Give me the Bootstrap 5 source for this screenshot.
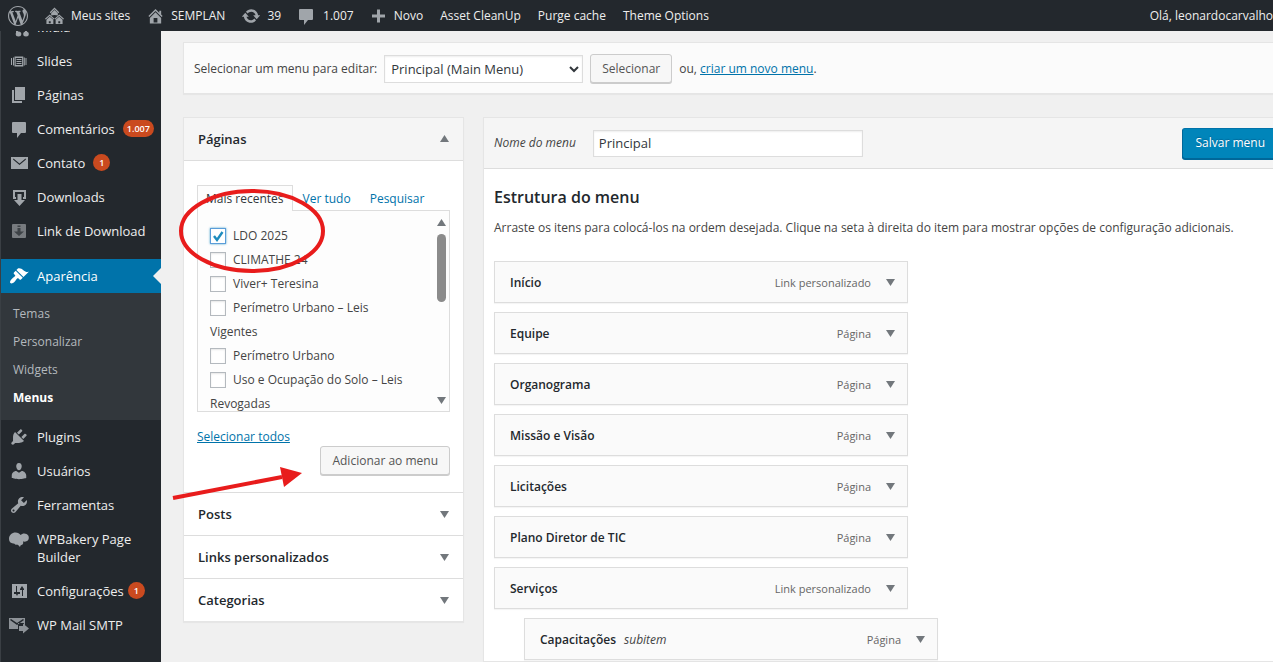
<!DOCTYPE html>
<html lang="pt-BR">
<head>
<meta charset="utf-8">
<meta name="viewport" content="width=device-width, initial-scale=1">
<title>Menus ‹ SEMPLAN — WordPress</title>
<link href="https://cdn.jsdelivr.net/npm/bootstrap@5.3.0/dist/css/bootstrap.min.css" rel="stylesheet">
<style>
body{font-family:"Open Sans","Noto Sans",sans-serif;font-size:12px;line-height:18px;color:#444;background:#f0f0f0;overflow-x:hidden}
a{color:#0073aa}
svg{fill:currentColor;flex:none}
/* admin bar */
.adminbar{background:#23282d;height:31px;padding-left:8px;gap:17px;position:relative;z-index:3;white-space:nowrap}
.adminbar a{color:#eee;text-decoration:none;display:flex;align-items:center;gap:7px}
.adminbar svg,.sidemenu svg{color:#a0a5aa}
/* side menu */
.sidemenu{width:161px;flex:none;background:#23282d;border-left:1px solid #3a3f44;font-size:13px}
.sidemenu ul{margin:0;padding:0;list-style:none}
.toplist{position:relative;z-index:1;margin-top:-21px!important}
.toplist>li>a{display:flex;gap:8px;padding:8px 0 8px 8px;color:#eee;text-decoration:none}
.toplist>li>a svg{margin:-1px 0}
.pill{background:#ca4a1f;color:#fff;font-size:9px;font-weight:600;line-height:17px;border-radius:9px;min-width:17px;padding:0 4px;text-align:center;height:17px}
.toplist>.current{margin-top:11px}
.toplist>.current>a{background:#0073aa;color:#fff;position:relative}
.toplist>.current>a svg{color:#fff}
.toplist>.current>a::after{content:"";position:absolute;right:0;top:9px;border:8px solid transparent;border-left-width:0;border-right-color:#f0f0f0}
.submenu{background:#32373c;padding:7px 0 8px!important;font-size:12px}
.submenu a{display:block;padding:5px 12px;color:#b4b9be;text-decoration:none}
.submenu .on{color:#fff;font-weight:700}
/* content */
.content-area{padding:11px 0 0 22px;min-width:0}
.panel{border:1px solid #e5e5e5;background:#fff;box-shadow:0 1px 1px rgba(0,0,0,.04)}
.flush-end{border-right:0}
.picker{background:#fbfbfb;padding:11px 10px 10px;margin-bottom:23px;gap:7px}
.picker .field{width:199px}
.field{border:1px solid #ddd;background:#fff;color:#32373c;font-size:13px;height:28px;padding:0 5px;border-radius:0;box-shadow:inset 0 1px 2px rgba(0,0,0,.07)}
.picker .field{padding:0 2px}
.wpbtn{font-size:12px;line-height:18px;height:29px;padding:4px 11px;border:1px solid #ccc;border-radius:3px;background:#f7f7f7;color:#555;box-shadow:0 1px 0 #ccc}
.savebtn{background:#0085ba;border-color:#0073aa #006799 #006799;color:#fff;font-weight:500;box-shadow:0 1px 0 #006799;border-right:0;border-radius:3px 0 0 3px;text-shadow:0 -1px 1px #006799;height:31px;padding:5px 8px 5px 12px}
.boxes{width:281px;flex:none;position:relative}
.boxhead{width:100%;height:43px;padding:0 14px;border:0;border-top:1px solid #ddd;background:#fff;color:#23282d;font-weight:600;font-size:13px;display:flex;align-items:center;justify-content:space-between}
.boxhead.open{background:#f5f5f5;border-top:0;border-bottom:1px solid #ddd}
.tri{width:9px;height:8px;color:#72777c}
.boxbody{padding:24px 13px 17px}
.tabs{position:relative;z-index:1;height:26px;margin-bottom:-1px}
.tabs a{text-decoration:none;padding:5px 9px 0 10px;height:26px}
.tabs .active{border:1px solid #ddd;border-bottom:0;background:#fdfdfd;color:#32373c;padding:4px 8px 0}
.choices{height:202px;border:1px solid #ddd;background:#fdfdfd;padding:13px 30px 0 12px;overflow:hidden;position:relative}
.choices label{display:block;line-height:24px}
.tick{appearance:none;width:16px;height:16px;border:1px solid #b4b9be;background:#fff;margin:0 7px 0 0;vertical-align:-4px;box-shadow:inset 0 1px 2px rgba(0,0,0,.1)}
.tick:checked{border-color:#5b9dd9;box-shadow:0 0 2px rgba(30,140,190,.8);background:#fff url("data:image/svg+xml,%3Csvg xmlns='http://www.w3.org/2000/svg' viewBox='0 0 14 14'%3E%3Cpath d='M3 7l3 4 5.500-8' fill='none' stroke='%231e8cbe' stroke-width='2.400'/%3E%3C/svg%3E")}
.scroller{position:absolute;right:2px;top:8px;bottom:7px;width:12px;display:flex;flex-direction:column;align-items:center;color:#8b8b8b}
.thumb{width:9px;height:68px;border-radius:5px;background:#8b8b8b;margin:7px 0 auto}
.marks{position:absolute;left:-11px;top:68px;z-index:2;pointer-events:none}
.editor{margin-left:19px}
.edithead{height:51px;background:#f5f5f5;border-bottom:1px solid #ddd;padding-left:10px;gap:12px}
.namebox{width:270px;height:27px;margin-left:5px}
.h-struct{font-size:16px;line-height:24px;font-weight:600;color:#23282d;margin:0 0 10px}
.editbody{padding:16px 10px 0}
.items{margin:24px 0 0;padding:0;list-style:none;display:grid;gap:9px}
.items li{width:414px;height:42px;border:1px solid #ddd;background:#fafafa;padding:1px 12px 0 15px;box-shadow:0 1px 1px rgba(0,0,0,.04)}
.items b{font-weight:600;color:#23282d}
.items span{font-size:11px;color:#666}
.items button{border:0;background:none;padding:0;margin-left:15px;line-height:8px;display:flex}
.items .sub{margin-left:30px}
</style>
</head>
<body>
<div class="d-flex flex-column min-vh-100">
<nav class="adminbar d-flex align-items-center" aria-label="Barra de ferramentas">
  <a href="#" aria-label="Sobre o WordPress"><svg width="20" height="20" viewBox="0 0 20 20"><path d="M20 10c0-5.510-4.490-10-10-10C4.480 0 0 4.490 0 10c0 5.520 4.480 10 10 10 5.510 0 10-4.480 10-10zM7.780 15.370L4.370 6.220c.55-.02 1.170-.08 1.170-.08.5-.06.44-1.130-.06-1.110 0 0-1.450.11-2.370.11-.18 0-.37 0-.58-.01C4.120 2.690 6.870 1.110 10 1.110c2.330 0 4.450.87 6.050 2.340-.68-.11-1.650.39-1.650 1.580 0 .74.45 1.360.9 2.100.35.61.55 1.360.55 2.460 0 1.490-1.400 5-1.400 5l-3.030-8.370c.54-.02.82-.17.82-.17.5-.05.44-1.250-.06-1.220 0 0-1.440.12-2.380.12-.87 0-2.330-.12-2.330-.12-.5-.03-.56 1.200-.06 1.220l.92.08 1.260 3.410zM17.410 10c.24-.64.74-1.870.43-4.250.7 1.290 1.050 2.710 1.050 4.250 0 3.290-1.730 6.240-4.400 7.780.97-2.590 1.940-5.200 2.920-7.780zM6.100 18.090C3.120 16.650 1.110 13.530 1.110 10c0-1.300.23-2.480.72-3.590C3.250 10.300 4.670 14.200 6.100 18.090zm4.030-6.630l2.580 6.980c-.86.29-1.760.45-2.710.45-.79 0-1.570-.11-2.290-.33.81-2.380 1.620-4.740 2.420-7.100z"/></svg></a>
  <a href="#"><svg width="19" height="20" viewBox="0 0 20 20"><path d="M10 1l5 5-1 1-4-4-4 4-1-1zM6.500 7L10 3.800 13.500 7v2.500L10 9l-3.500.5zM5 8.500l5 4.500-.8.8L5 10l-4.200 3.800L0 13zM15 8.500l5 4.500-.8.8L15 10l-4.200 3.800L10 13zM1.500 14L5 10.800 8.800 14v4.500H1.500zm2.500 1.500v2h2v-2zM11.200 14L15 10.800l3.500 3.200v4.500h-7.300zm2.800 1.500v2h2v-2z" fill-rule="evenodd"/></svg>Meus sites</a>
  <a href="#"><svg width="17" height="20" viewBox="1 0 18 20"><path d="M16 8.500l1.530 1.530-1.060 1.060L10 4.600l-6.470 6.490-1.060-1.060L10 2.500l4 4v-2h2v4zm-6-2.460l6 5.990V18H4v-5.970zM12 17v-5H8v5h4z"/></svg>SEMPLAN</a>
  <a href="#"><svg width="18" height="20" viewBox="1 0 18 20"><path d="M10.200 3.280c3.530 0 6.430 2.610 6.920 6h2.080l-3.500 4-3.500-4h2.320c-.45-1.970-2.210-3.450-4.320-3.450-1.450 0-2.730.71-3.540 1.780L4.950 5.660C6.230 4.200 8.110 3.280 10.200 3.280zm-.4 13.440c-3.520 0-6.430-2.610-6.920-6H.8l3.500-4c1.170 1.330 2.330 2.670 3.500 4H5.480c.45 1.970 2.210 3.450 4.320 3.450 1.450 0 2.730-.71 3.540-1.780l1.710 1.950c-1.280 1.460-3.150 2.380-5.250 2.380z"/></svg>39</a>
  <a href="#"><svg width="18" height="20" viewBox="2 0 18 20"><path d="M4 3h12q1 0 1 1v9q0 1-1 1h-4l-4 5v-5H4q-1 0-1-1V4q0-1 1-1z"/></svg>1.007</a>
  <a href="#"><svg width="16" height="20" viewBox="3 0 16 20"><path d="M17 8.500v3h-5v5H9v-5H4v-3h5v-5h3v5z"/></svg>Novo</a>
  <a href="#">Asset CleanUp</a>
  <a href="#">Purge cache</a>
  <a href="#">Theme Options</a>
  <a href="#" class="ms-auto">Olá, leonardocarvalho</a>
</nav>

<div class="d-flex flex-grow-1">
<aside class="sidemenu">
  <ul class="toplist">
    <li><a href="#"><svg width="20" height="20" viewBox="0 0 20 20"><path d="M7 3l11-1v13h-2V7H9v10H7z"/><ellipse cx="9.500" cy="17" rx="2.800" ry="2.500"/><ellipse cx="17" cy="17" rx="2.800" ry="2.500"/></svg>Mídia</a></li>
    <li><a href="#"><svg width="20" height="20" viewBox="0 0 20 20"><path fill-rule="evenodd" d="M2 7h1v7H2zM16.500 7h1v7h-1zM4 6.500h1v8H4zM14.800 6.500h1v8h-1zM5.500 5.500h8.800v10H5.500zm1.200 1.500v7h6.400V7zM7.500 8h5v1h-5zm0 2h5v1h-5zm0 2h5v1h-5z"/></svg>Slides</a></li>
    <li><a href="#"><svg width="20" height="20" viewBox="0 0 20 20"><path d="M6 15V2h10v13H6zm-1 1h8v2H3V5h2v11z"/></svg>Páginas</a></li>
    <li><a href="#"><svg width="20" height="20" viewBox="0 0 20 20"><path d="M4 3h12q1 0 1 1v9q0 1-1 1h-4l-4 5v-5H4q-1 0-1-1V4q0-1 1-1z"/></svg>Comentários<span class="pill">1.007</span></a></li>
    <li><a href="#"><svg width="20" height="20" viewBox="0 0 20 20"><path d="M2 4h17v12H2zm2.500 1.500L4 6.500l6.500 5.500L17 6.500l-.5-1-6 5z" fill-rule="evenodd"/></svg>Contato<span class="pill">1</span></a></li>
    <li><a href="#"><svg width="20" height="20" viewBox="0 0 20 20"><path d="M4 3h13v9h-3v-2h1V5H6v5h1v2H4zM8.500 7h4v6h3.500l-5.500 6L5 13h3.500z"/></svg>Downloads</a></li>
    <li><a href="#"><svg width="20" height="20" viewBox="0 0 20 20"><rect x="3" y="3" width="14" height="14" rx="1" fill="#777b7f"/><path d="M8.500 4.500h3V6h-3zm0 2.500h3v3.500H15L10 15l-5-4.500h3.500z" fill="#3d4246"/></svg>Link de Download</a></li>
    <li class="current"><a href="#"><svg width="20" height="20" viewBox="0 0 20 20"><path d="M14.480 11.060L7.410 3.990l1.500-1.500c.5-.56 2.300-.47 3.510.32 1.210.8 1.430 1.280 2.910 2.100 1.180.64 2.450 1.260 4.450.85zm-.71.71L6.700 4.700 4.930 6.470c-.39.39-.39 1.020 0 1.410l1.060 1.060c.39.39.39 1.030 0 1.420-.6.6-1.430 1.110-2.210 1.690-.35.26-.7.53-1.010.84C1.430 14.230.4 16.080 1.400 17.070c.99 1 2.840-.03 4.180-1.360.31-.31.58-.66.85-1.020.57-.78 1.080-1.610 1.690-2.210.39-.39 1.020-.39 1.410 0l1.060 1.060c.39.39 1.020.39 1.410 0z"/></svg>Aparência</a>
      <ul class="submenu">
        <li><a href="#">Temas</a></li><li><a href="#">Personalizar</a></li><li><a href="#">Widgets</a></li><li><a href="#" class="on">Menus</a></li>
      </ul></li>
    <li><a href="#"><svg width="20" height="20" viewBox="0 0 20 20"><path d="M13.110 4.360L9.870 7.600 8 5.730l3.240-3.240c.35-.34 1.050-.2 1.560.32.52.51.66 1.210.31 1.550zm-8 1.770l.91-1.120 9.010 9.010-1.190.84c-.71.71-2.630 1.160-3.820 1.160H6.140L4.900 17.260c-.59.59-1.540.59-2.120 0-.59-.58-.59-1.530 0-2.120l1.240-1.240v-3.880c0-1.130.4-3.190 1.090-3.890zm7.260 3.970l3.240-3.240c.34-.35 1.040-.21 1.550.31.52.51.66 1.210.31 1.550l-3.240 3.250z"/></svg>Plugins</a></li>
    <li><a href="#"><svg width="20" height="20" viewBox="0 0 20 20"><path d="M10 9.250c-2.270 0-2.730-3.440-2.730-3.440C7 4.020 7.820 2 9.970 2c2.160 0 2.980 2.020 2.710 3.810 0 0-.41 3.440-2.680 3.440zm0 2.570L12.720 10c2.390 0 4.520 2.330 4.520 4.530v2.490s-3.650 1.130-7.240 1.130c-3.650 0-7.240-1.130-7.240-1.130v-2.490c0-2.250 1.940-4.480 4.470-4.480z"/></svg>Usuários</a></li>
    <li><a href="#"><svg width="20" height="20" viewBox="0 0 20 20"><path d="M16.680 9.770c-1.340 1.340-3.300 1.670-4.950.99l-5.410 6.520c-.99.99-2.590.99-3.580 0s-.99-2.590 0-3.570l6.520-5.420c-.68-1.650-.35-3.610.99-4.950 1.280-1.280 3.120-1.620 4.720-1.060l-2.890 2.890 2.820 2.820 2.860-2.870c.53 1.580.18 3.390-1.080 4.650zM3.810 16.210c.4.39 1.040.39 1.430 0 .4-.4.4-1.040 0-1.430-.39-.4-1.030-.4-1.430 0-.39.39-.39 1.030 0 1.430z"/></svg>Ferramentas</a></li>
    <li><a href="#"><svg width="20" height="20" viewBox="0 0 20 20"><path d="M0 10c0-4 3-6.500 6.500-6.500 2.500 0 4 1 5 2.500 1.500-1.500 4-2 6-1 3 1.500 3 5.500.5 7-1.500 1-3 .8-4 .6.5 1.500 0 2.500-1 3.200-.8.5-1.500.2-2 2.200-1-1-1.500-2-3-2.500-1 .7-2 .3-2.500-.7C2 14.500 0 13 0 10z"/></svg><span>WPBakery Page Builder</span></a></li>
    <li><a href="#"><svg width="20" height="20" viewBox="0 0 20 20"><path fill-rule="evenodd" d="M3 3h15v14H3zm4 2v6H5v2h2l1 2 1-2h2v-2H8V5zm6 10V9h-2V8l2-3 2 3v1h-1v6z"/></svg><span class="d-flex gap-1">Configurações<span class="pill">1</span></span></a></li>
    <li><a href="#"><svg width="20" height="20" viewBox="0 0 20 20"><path fill="#8d9297" fill-rule="evenodd" d="M0 3h16v7h-1V8H9v6H0zm2 1L1 5l7 5 7-5-1-1-6 4z"/><path fill="#8d9297" d="M10 11h4V8.500l6 5-6 5V16h-4z"/></svg>WP Mail SMTP</a></li>
  </ul>
</aside>

<main class="content-area flex-grow-1 d-flex flex-column">
  <form class="panel flush-end picker d-flex align-items-center">
    <label for="menu">Selecionar um menu para editar:</label>
    <select class="field" id="menu"><option>Principal (Main Menu)</option></select>
    <button type="button" class="wpbtn">Selecionar</button>
    <span>ou, <a href="#">criar um novo menu</a>.</span>
  </form>
  <div class="d-flex flex-grow-1 align-items-stretch">
    <div class="boxes">
      <div class="panel">
        <button class="boxhead open" type="button">Páginas <svg class="tri" viewBox="0 0 9 8"><path d="M0 7h9L4.500 0z"/></svg></button>
        <div class="boxbody">
          <nav class="tabs d-flex"><a href="#" class="active">Mais recentes</a><a href="#">Ver tudo</a><a href="#">Pesquisar</a></nav>
          <div class="choices">
            <label><input type="checkbox" class="tick" checked>LDO 2025</label>
            <label><input type="checkbox" class="tick">CLIMATHE 24</label>
            <label><input type="checkbox" class="tick">Viver+ Teresina</label>
            <label><input type="checkbox" class="tick">Perímetro Urbano – Leis<br>Vigentes</label>
            <label><input type="checkbox" class="tick">Perímetro Urbano</label>
            <label><input type="checkbox" class="tick">Uso e Ocupação do Solo – Leis<br>Revogadas</label>
            <div class="scroller" aria-hidden="true"><svg class="tri" viewBox="0 0 9 8"><path d="M0 7h9L4.500 0z"/></svg><div class="thumb"></div><svg class="tri" viewBox="0 0 9 8"><path d="M0 1h9L4.500 8z"/></svg></div>
          </div>
          <div class="pt-3"><a href="#">Selecionar todos</a></div>
          <div class="text-end"><button type="button" class="wpbtn">Adicionar ao menu</button></div>
        </div>
        <button class="boxhead" type="button">Posts <svg class="tri" viewBox="0 0 9 8"><path d="M0 1h9L4.500 8z"/></svg></button>
        <button class="boxhead" type="button">Links personalizados <svg class="tri" viewBox="0 0 9 8"><path d="M0 1h9L4.500 8z"/></svg></button>
        <button class="boxhead" type="button">Categorias <svg class="tri" viewBox="0 0 9 8"><path d="M0 1h9L4.500 8z"/></svg></button>
      </div>
      <svg class="marks" width="154" height="320" viewBox="0 0 154 320" aria-hidden="true"><ellipse cx="80" cy="46" rx="71" ry="40" fill="none" stroke="#e81c1c" stroke-width="4"/><path d="M1 313L110 292" stroke="#e81c1c" stroke-width="4" fill="none"/><path d="M108 282l22 6-18 14z" fill="#e81c1c"/></svg>
    </div>
    <section class="panel flush-end editor flex-grow-1">
      <div class="edithead d-flex align-items-center">
        <label for="nome" class="fst-italic">Nome do menu</label>
        <input id="nome" class="field namebox" value="Principal">
        <button type="button" class="wpbtn savebtn ms-auto">Salvar menu</button>
      </div>
      <div class="editbody">
        <h3 class="h-struct">Estrutura do menu</h3>
        <p class="m-0">Arraste os itens para colocá-los na ordem desejada. Clique na seta à direita do item para mostrar opções de configuração adicionais.</p>
        <ul class="items" id="items"></ul>
      </div>
    </section>
  </div>
</main>
</div>
</div>
<script>
const L = 'Link personalizado', P = 'Página';
document.getElementById('items').innerHTML = [
  ['Início', L], ['Equipe', P], ['Organograma', P], ['Missão e Visão', P], ['Licitações', P],
  ['Plano Diretor de TIC', P], ['Serviços', L], ['Capacitações', P, 1]
].map(([name, kind, sub]) => `<li class="d-flex align-items-center ${sub ? 'sub' : ''}"><b>${name}</b>${sub ? '<i class="ms-2">subitem</i>' : ''}<span class="ms-auto">${kind}</span><button type="button" aria-label="Expandir ${name}"><svg class="tri" viewBox="0 0 9 8"><path d="M0 0h9L4.500 7z"/></svg></button></li>`).join('');
</script>
<script src="https://cdn.jsdelivr.net/npm/bootstrap@5.3.0/dist/js/bootstrap.bundle.min.js"></script>
</body>
</html>
